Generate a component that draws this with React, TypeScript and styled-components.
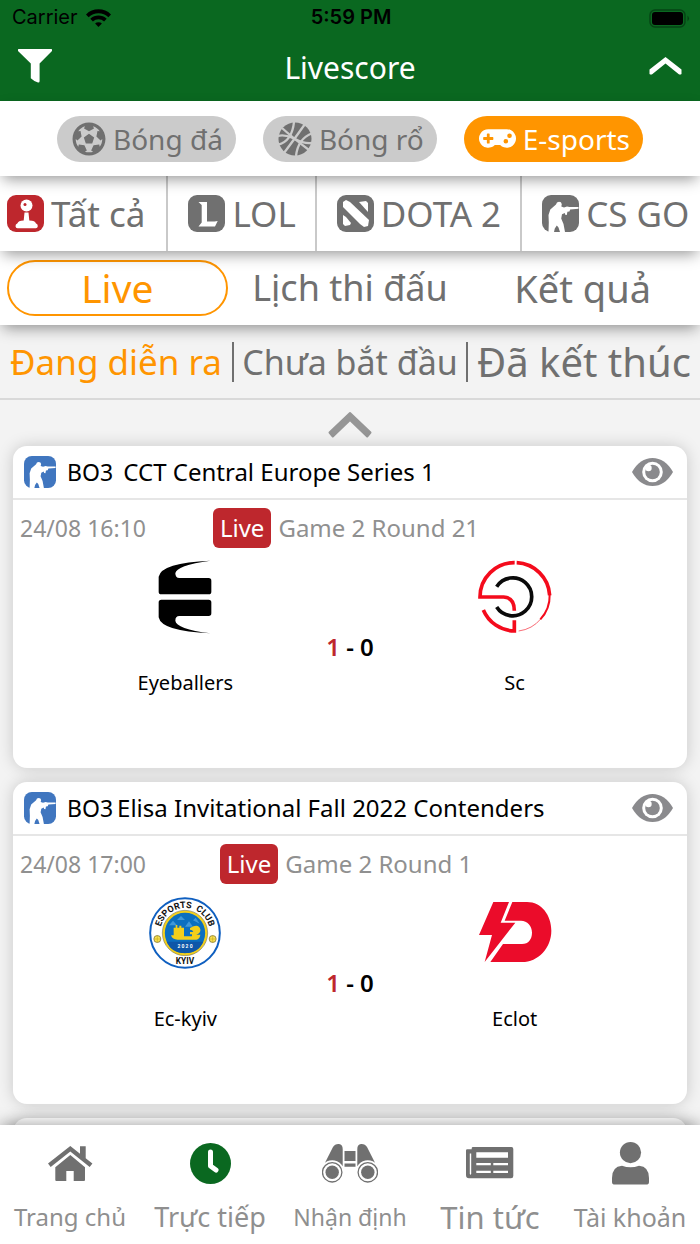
import React from 'react';
import styled, { createGlobalStyle } from 'styled-components';
import { FaFutbol, FaGamepad } from 'react-icons/fa';

const GREEN = '#0a6820';
const ORANGE = '#ff9500';
const RED = '#be272d';
const GRAY = '#707070';
const LINE = '#c9c9c9';

const GlobalStyle = createGlobalStyle`
  * { box-sizing: border-box; }
  body { margin: 0; background: #f3f3f3; }
  body, button { font-family: 'Noto Sans', 'Open Sans', sans-serif; }
  button { border: 0; padding: 0; background: none; cursor: pointer; color: inherit; }
  svg { display: block; flex: none; }
  h1, h2, p { margin: 0; font-weight: 400; }
`;

const Screen = styled.div`
  height: 100vh;
  display: flex;
  flex-direction: column;
  overflow: hidden;
`;

const Header = styled.header`
  background: ${GREEN};
  flex: none;
`;

const StatusBar = styled.div`
  display: grid;
  grid-template-columns: 1fr auto 1fr;
  align-items: center;
  height: 35px;
  padding: 0 10px 0 12px;
  font: 400 20px/35px Inter, 'Liberation Sans', sans-serif;
  color: #000;
`;

const Carrier = styled.span`
  display: flex;
  align-items: center;
  gap: 8px;
`;

const Clock = styled.span`
  font-weight: 600;
`;

const BatterySlot = styled.span`
  justify-self: end;
`;

const TitleBar = styled.div`
  display: grid;
  grid-template-columns: 1fr auto 1fr;
  align-items: center;
  height: 66px;
  padding: 0 18px 4px;
  color: #fff;
`;

const Title = styled.h1`
  padding-top: 4px;
  font-size: 30px;
  line-height: 40px;
`;

const IconButton = styled.button<{ $end?: boolean }>`
  justify-self: ${(p) => (p.$end ? 'end' : 'start')};
`;

const Bar = styled.nav<{ $level: number }>`
  position: relative;
  z-index: ${(p) => p.$level};
  flex: none;
  display: flex;
  align-items: center;
  height: 75px;
  background: #fff;
  box-shadow: 0 6px 14px -3px rgba(0, 0, 0, 0.42);
`;

const SportBar = styled(Bar)`
  justify-content: center;
  gap: 27px;
`;

const SportPill = styled.button<{ $active?: boolean }>`
  display: flex;
  align-items: center;
  gap: 7px;
  height: 46px;
  padding: 0 13px 0 15px;
  border-radius: 23px;
  font-size: 28px;
  line-height: 46px;
  background: ${(p) => (p.$active ? ORANGE : '#cbcbcb')};
  color: ${(p) => (p.$active ? '#fff' : GRAY)};
`;

const GameBar = styled(Bar)`
  align-items: stretch;
`;

const GameTab = styled.button`
  display: flex;
  align-items: center;
  gap: 7px;
  padding: 0 19px 0 20px;
  border-right: 2px solid ${LINE};
  font-size: 35px;
  line-height: 48px;
  color: ${GRAY};
  white-space: nowrap;
  &:first-child { padding: 0 21px 0 7px; }
  &:last-child { border-right: 0; padding-right: 0; }
`;

const ViewBar = styled(Bar)`
  height: 74px;
  padding: 0 7px;
  gap: 12px;
`;

const ViewTab = styled.button<{ $active?: boolean; $size: number }>`
  flex: 1 1 0;
  height: 56px;
  border: 2px solid ${(p) => (p.$active ? ORANGE : 'transparent')};
  border-radius: 28px;
  font-size: ${(p) => p.$size}px;
  line-height: 52px;
  color: ${(p) => (p.$active ? ORANGE : GRAY)};
  white-space: nowrap;
`;

const PhaseBar = styled.nav`
  flex: none;
  display: flex;
  align-items: center;
  height: 75px;
  border-bottom: 2px solid #d9d9d9;
`;

const PhaseTab = styled.button<{ $active?: boolean; $size: number }>`
  flex: 1 1 0;
  height: 40px;
  font-size: ${(p) => p.$size}px;
  line-height: 38px;
  color: ${(p) => (p.$active ? ORANGE : GRAY)};
  white-space: nowrap;
  & + & { border-left: 2px solid ${GRAY}; }
`;

const Feed = styled.main`
  flex: 1 1 0;
  min-height: 0;
  overflow: hidden;
  display: flex;
  flex-direction: column;
  gap: 14px;
  padding: 0 13px;
`;

const Collapse = styled.button`
  flex: none;
  display: flex;
  align-self: center;
  padding-top: 11px;
  height: 32px;
`;

const Card = styled.article`
  flex: none;
  min-height: 322px;
  border-radius: 14px;
  background: #fff;
  box-shadow: 0 0 16px rgba(0, 0, 0, 0.18);
`;

const CardHeader = styled.header`
  display: flex;
  align-items: center;
  height: 54px;
  padding: 0 14px 0 11px;
  border-bottom: 2px solid #e6e6e6;
`;

const Format = styled.span`
  margin: 0 4px 0 11px;
  font-size: 23px;
  line-height: 32px;
`;

const Tournament = styled.h2`
  flex: 1;
  font-size: 24px;
  line-height: 32px;
  white-space: pre;
`;

const InfoRow = styled.div`
  display: grid;
  grid-template-columns: 1fr auto 1fr;
  align-items: center;
  height: 40px;
  margin: 8px 15px 0 7px;
  line-height: 40px;
  color: #909090;
`;

const Kickoff = styled.time`
  font-size: 23px;
`;

const LiveInfo = styled.span`
  display: flex;
  gap: 7px;
  font-size: 24px;
`;

const LiveBadge = styled.span`
  padding: 0 7px;
  border-radius: 6px;
  background: ${RED};
  color: #fff;
`;

const Teams = styled.div`
  display: grid;
  grid-template-columns: 1fr 1fr 1fr;
  padding: 12px 90px 0;
`;

const Team = styled.div`
  display: flex;
  flex-direction: column;
  align-items: center;
  gap: 35px;
  font-size: 20px;
  line-height: 28px;
`;

const Score = styled.p`
  padding-top: 70px;
  text-align: center;
  font-size: 24px;
  font-weight: 600;
  line-height: 34px;
`;

const Leading = styled.span`
  color: ${RED};
`;

const BottomNav = styled.nav`
  position: relative;
  z-index: 5;
  flex: none;
  display: grid;
  grid-template-columns: repeat(5, 1fr);
  height: 119px;
  background: #fff;
  box-shadow: 0 0 16px rgba(0, 0, 0, 0.4);
`;

const NavItem = styled.button<{ $size: number }>`
  display: flex;
  flex-direction: column;
  align-items: center;
  font-size: ${(p) => p.$size}px;
  line-height: 32px;
  color: #8f8f8f;
  white-space: nowrap;
`;

const NavIcon = styled.span<{ $active?: boolean }>`
  display: flex;
  align-items: center;
  height: 76px;
  color: ${(p) => (p.$active ? GREEN : GRAY)};
`;

const WifiIcon = () => (
  <svg width="25" height="18" viewBox="0 0 25 18" fill="none" stroke="#000" strokeWidth="3.8">
    <path d="M1.300 6.800a16 16 0 0 1 22.400 0" />
    <path d="M5.600 11.200a10 10 0 0 1 13.800 0" />
    <path d="M12.500 18l-3.400-3.400a4.800 4.800 0 0 1 6.800 0z" fill="#000" stroke="none" />
  </svg>
);

const BatteryIcon = () => (
  <svg width="41" height="20" viewBox="0 0 41 20">
    <rect x="1" y="2" width="35" height="17" rx="5" fill="none" stroke="#064315" strokeWidth="1.4" />
    <rect x="3" y="4" width="31" height="13" rx="3" fill="#000" />
    <path d="M38.500 7.500q3 3 0 6z" fill="#064315" />
  </svg>
);

const FilterIcon = () => (
  <svg width="34" height="34" viewBox="0 0 34 34" fill="#fff">
    <path d="M.6 0h32.800q.6 0 .6.6V2L21.600 14.500V32q0 1.800-1.600 1.500-4-1.200-7.200-4.300V14.500L0 2V.6Q0 0 .6 0z" />
  </svg>
);

const TitleChevron = () => (
  <svg width="33" height="18" viewBox="0 0 32 18" fill="#fff">
    <path d="M16 0l16 12.500v4.500q-1.500 1.200-3 0L16 6.500 3 17q-1.500 1.200-3 0v-4.500z" />
  </svg>
);

const BasketballIcon = () => (
  <svg width="34" height="34" viewBox="0 0 34 34">
    <circle cx="17" cy="17" r="16.500" fill={GRAY} />
    <g fill="none" stroke="#cbcbcb" strokeWidth="2.3">
      <path d="M6 31Q15 19 27 2" />
      <path d="M4 6Q15 16 31 28" />
      <path d="M-1 23Q14 20 16 0" />
      <path d="M18 34Q20 16 35 11" />
      <path d="M-1 14Q8 12 17 17t17 4" />
    </g>
  </svg>
);

const Tile = ({ fill, children }: { fill: string; children: React.ReactNode }) => (
  <svg width="37" height="37" viewBox="0 0 37 37">
    <rect width="37" height="37" rx="9" fill={fill} />
    <g fill="#fff">{children}</g>
  </svg>
);

const AllGamesIcon = () => (
  <Tile fill={RED}>
    <circle cx="19.500" cy="10.500" r="6" />
    <circle cx="18" cy="9.500" r="1.500" fill={RED} />
    <path d="M17.500 17.500h4l.8 8q6.200.3 6.500 2.700 2.300 1 2 3-.3 2-2 2H10.500q-1.800 0-2-2-.2-2 2-3 .5-2.400 6.200-2.700z" />
  </Tile>
);

const LolIcon = () => (
  <Tile fill={GRAY}>
    <path d="M10.500 7H19v19.500h7.500l3.200-.5-2.700 5.500H10.500l3.200-4V10z" />
  </Tile>
);

const DotaIcon = () => (
  <Tile fill={GRAY}>
    <path d="M6 7l3-2 4 2 19 18-1 6-4 1-4-3L6 12z" />
    <path d="M22 7l7-1 2 2v9z" />
    <path d="M6 20l3 2 5 6-1 2-5 1-2-2z" />
  </Tile>
);

const soldier =
  'M14 9.500q.5-2.700 3-2.700t2.800 2.400l-.5 2.300 2.700 1 3-1 2.500.5h9v1.800l-8.300.7-.8 2-2 .3-.6 3.200-1.600-.3-.4-1.700-2.800 1.300-.8 4.200 2.300 5.500 1.500 8h-5l-1.500-4.500-1.700-2-2 3-.8 3.500H6.500l.3-9.500-.3-7.500 1.800-5.500z';

const CsTabIcon = () => (
  <Tile fill={GRAY}>
    <path d={soldier} />
  </Tile>
);

const CsCardIcon = () => (
  <svg width="32" height="32" viewBox="0 0 37 37">
    <rect width="37" height="37" rx="9" fill="#4076bf" />
    <path d={soldier} fill="#fff" />
  </svg>
);

const CollapseChevron = () => (
  <svg width="44" height="27" viewBox="0 0 44 27">
    <path
      d="M22 2L1.500 21.500l3.300 4L22 9l17.200 16.500 3.300-4z"
      fill="#969696"
      stroke="#969696"
      strokeWidth="2"
      strokeLinejoin="round"
    />
  </svg>
);

const EyeIcon = () => (
  <svg width="41" height="28" viewBox="0 0 41 28">
    <path d="M0 14Q8 0 20.500 0T41 14Q33 28 20.500 28T0 14z" fill="#8a8a8d" />
    <circle cx="20.500" cy="14" r="10.300" fill="#fff" />
    <circle cx="20.500" cy="14" r="7.300" fill="#8a8a8d" />
    <circle cx="16.500" cy="10" r="3.200" fill="#fff" />
  </svg>
);

const EyeballersLogo = () => {
  const half =
    'M0 93V48Q8 6 155 0 52 14 50 38q0 14 12 14h88q8 0 8 8v33q0 8-8 8H8q-8 0-8-8z';
  return (
    <svg width="72" height="74" viewBox="-29 -2 216 222">
      <path d={half} />
      <path d={half} transform="translate(0 218) scale(1 -1)" />
    </svg>
  );
};

const ScLogo = () => (
  <svg width="74" height="74" viewBox="83 60 222 220" fill="none" stroke="#f40b1c" strokeWidth="11">
    <path d="M193 67A103 103 0 0 0 89 170H160Q192 172 192 211" />
    <path d="M99 209A103 103 0 0 0 192 272V240" />
    <path d="M199 67A104 104 0 0 1 298 165" />
    <path d="M298 163A104 104 0 0 1 270 237" strokeWidth="6" />
    <path d="M272 235A104 104 0 0 1 205 272" strokeWidth="3" opacity=".6" />
    <path d="M139 139A57 57 0 1 1 139 200" stroke="#0a0a0a" />
  </svg>
);

const KyivLogo = () => (
  <svg width="72" height="74" viewBox="58 47 216 222">
    <defs>
      <path id="badgeArc" d="M91 158A75 75 0 0 1 241 158" />
    </defs>
    <circle cx="166" cy="158" r="104.500" fill="#fff" stroke="#0f5fc0" strokeWidth="6" />
    <circle cx="166" cy="158" r="64" fill="#0b6fc0" stroke="#f3cf1b" strokeWidth="7" />
    <circle cx="166" cy="158" r="68" fill="none" stroke="#5b5b3c" strokeWidth="1.500" />
    <path d="M118 135l12-14 12 14zM142 119l12-12 12 12zM166 139l12-16 12 16zM190 120l8-8 12 18z" fill="#3f97d8" />
    <path d="M132 142h6v-8h5v8h6v-6h6v6h8v26h24v-6h-6v-7h10q-2-7-10-7v-5q26-15 31 4 2 12-12 16h12q-2 14-12 15h-56q-16 0-20-13h8z" fill="#f3cf1b" />
    <path d="M111 184h110q-14 34-55 34t-55-34z" fill="#0e57a8" />
    <g fill="#f9e152" stroke="#6a6128" strokeWidth="2">
      <circle cx="83" cy="176" r="10.500" />
      <circle cx="249" cy="176" r="10.500" />
      <path d="M83 166v20M73 176h20M249 166v20M239 176h20" stroke="#c9ad1c" />
    </g>
    <g fontFamily="Roboto, sans-serif" fontWeight="700" textAnchor="middle">
      <text fontSize="27" fill="#111">
        <textPath href="#badgeArc" startOffset="50%">ESPORTS&#160; CLUB</textPath>
      </text>
      <text x="166" y="251" fontSize="25" fill="#111">KYIV</text>
      <text x="166" y="203" fontSize="15" fill="#fff">2 0 2 0</text>
    </g>
  </svg>
);

const EclotLogo = () => (
  <svg width="74" height="74" viewBox="83 48 222 222" fill="#eb0c2a">
    <path d="M129 66h47l-25 62h44l-92 118 22-81H86z" />
    <path d="M186 66h44c44 0 73 40 73 86 0 52-40 94-88 94h-95l38-54h57c20 0 30-15 30-34 0-20-14-36-33-36h-49z" />
  </svg>
);

const HomeIcon = () => (
  <svg width="45" height="35" viewBox="0 0 45 35" fill="currentColor">
    <path d="M22.300 0L0 17.500 2.700 21l19.600-15.500L41.700 21l2.700-3.500-6.700-5.200V.3H32v7.500z" />
    <path d="M22.300 9L7.300 21.300V34q0 1 1 1h10V25h7.400v10H36q1 0 1-1V21.300z" />
  </svg>
);

const ClockIcon = () => (
  <svg width="41" height="41" viewBox="0 0 41 41">
    <circle cx="20.500" cy="20.500" r="20.500" fill="currentColor" />
    <path d="M20.500 9v14l5.500 4" fill="none" stroke="#fff" strokeWidth="5" strokeLinecap="round" strokeLinejoin="round" />
  </svg>
);

const BinocularsIcon = () => {
  const side = (
    <>
      <path d="M3 19.700L11 4Q13 .7 17 1q3.700.5 3.700 5v17.300A12 12 0 0 0 3 19.700z" />
      <circle cx="10.200" cy="29.300" r="9.700" fill="#fff" stroke="currentColor" strokeWidth="1.300" />
      <circle cx="10.200" cy="29.300" r="6.700" />
    </>
  );
  return (
    <svg width="56" height="40" viewBox="0 0 56 40" fill="currentColor">
      {side}
      <g transform="translate(56 0) scale(-1 1)">{side}</g>
      <path d="M22.500 8h11v10h-11zM22.500 20.500h11v3.300h-11z" />
    </svg>
  );
};

const NewsIcon = () => (
  <svg width="48" height="32" viewBox="0 0 48 32">
    <path d="M7 0h38.500Q47.300 0 47.300 2v27q0 2.300-2.300 2.300H3Q0 31.300 0 28V3.500q0-1.200 1.200-1.200H5.700V1.300Q5.700 0 7 0z" fill="currentColor" />
    <path d="M3.800 6.500h1.400V27q-.7 1.500-1.400 0zM10.300 5.300H42v5.400H10.300zM10.300 16h14.500v2.200H10.300zM27.300 16H42v2.200H27.300zM10.300 23.700h14.500v2.200H10.300zM27.300 23.700H42v2.200H27.300z" fill="#fff" />
  </svg>
);

const UserIcon = () => (
  <svg width="37" height="43" viewBox="0 0 37 43" fill="currentColor">
    <circle cx="18.500" cy="10.600" r="10.600" />
    <path d="M10 23.700q8.500 3.300 17 0Q37 24.500 37 36v4q0 2.600-3 2.600H3q-3 0-3-2.600v-4q0-11.500 10-12.300z" />
  </svg>
);

type Side = { name: string; Logo: () => React.JSX.Element };
type Match = { title: string; date: string; round: string; home: Side; away: Side };

const matches: Match[] = [
  {
    title: ' CCT Central Europe Series 1',
    date: '24/08 16:10',
    round: 'Game 2 Round 21',
    home: { name: 'Eyeballers', Logo: EyeballersLogo },
    away: { name: 'Sc', Logo: ScLogo },
  },
  {
    title: 'Elisa Invitational Fall 2022 Contenders',
    date: '24/08 17:00',
    round: 'Game 2 Round 1',
    home: { name: 'Ec-kyiv', Logo: KyivLogo },
    away: { name: 'Eclot', Logo: EclotLogo },
  },
];

const MatchCard = ({ match }: { match: Match }) => (
  <Card>
    <CardHeader>
      <CsCardIcon />
      <Format>BO3</Format>
      <Tournament>{match.title}</Tournament>
      <IconButton aria-label="Watch">
        <EyeIcon />
      </IconButton>
    </CardHeader>
    <InfoRow>
      <Kickoff>{match.date}</Kickoff>
      <LiveInfo>
        <LiveBadge>Live</LiveBadge>
        {match.round}
      </LiveInfo>
    </InfoRow>
    <Teams>
      <Team>
        <match.home.Logo />
        {match.home.name}
      </Team>
      <Score>
        <Leading>1</Leading> - 0
      </Score>
      <Team>
        <match.away.Logo />
        {match.away.name}
      </Team>
    </Teams>
  </Card>
);

export default function App() {
  return (
    <Screen>
      <GlobalStyle />
      <Header>
        <StatusBar>
          <Carrier>
            Carrier <WifiIcon />
          </Carrier>
          <Clock>5:59 PM</Clock>
          <BatterySlot>
            <BatteryIcon />
          </BatterySlot>
        </StatusBar>
        <TitleBar>
          <IconButton aria-label="Filter">
            <FilterIcon />
          </IconButton>
          <Title>Livescore</Title>
          <IconButton $end aria-label="Collapse">
            <TitleChevron />
          </IconButton>
        </TitleBar>
      </Header>

      <SportBar $level={4}>
        <SportPill>
          <FaFutbol size={34} />
          Bóng đá
        </SportPill>
        <SportPill>
          <BasketballIcon />
          Bóng rổ
        </SportPill>
        <SportPill $active>
          <FaGamepad size={37} />
          E-sports
        </SportPill>
      </SportBar>

      <GameBar $level={3}>
        <GameTab><AllGamesIcon />Tất cả</GameTab>
        <GameTab><LolIcon />LOL</GameTab>
        <GameTab><DotaIcon />DOTA 2</GameTab>
        <GameTab><CsTabIcon />CS GO</GameTab>
      </GameBar>

      <ViewBar $level={2}>
        <ViewTab $active $size={39}>Live</ViewTab>
        <ViewTab $size={36}>Lịch thi đấu</ViewTab>
        <ViewTab $size={38}>Kết quả</ViewTab>
      </ViewBar>

      <PhaseBar>
        <PhaseTab $active $size={35}>Đang diễn ra</PhaseTab>
        <PhaseTab $size={34}>Chưa bắt đầu</PhaseTab>
        <PhaseTab $size={40}>Đã kết thúc</PhaseTab>
      </PhaseBar>

      <Feed>
        <Collapse aria-label="Collapse list">
          <CollapseChevron />
        </Collapse>
        {matches.map((m) => (
          <MatchCard key={m.title} match={m} />
        ))}
        <Card />
      </Feed>

      <BottomNav>
        <NavItem $size={24}>
          <NavIcon><HomeIcon /></NavIcon>
          Trang chủ
        </NavItem>
        <NavItem $size={27}>
          <NavIcon $active><ClockIcon /></NavIcon>
          Trực tiếp
        </NavItem>
        <NavItem $size={23}>
          <NavIcon><BinocularsIcon /></NavIcon>
          Nhận định
        </NavItem>
        <NavItem $size={31}>
          <NavIcon><NewsIcon /></NavIcon>
          Tin tức
        </NavItem>
        <NavItem $size={25}>
          <NavIcon><UserIcon /></NavIcon>
          Tài khoản
        </NavItem>
      </BottomNav>
    </Screen>
  );
}
